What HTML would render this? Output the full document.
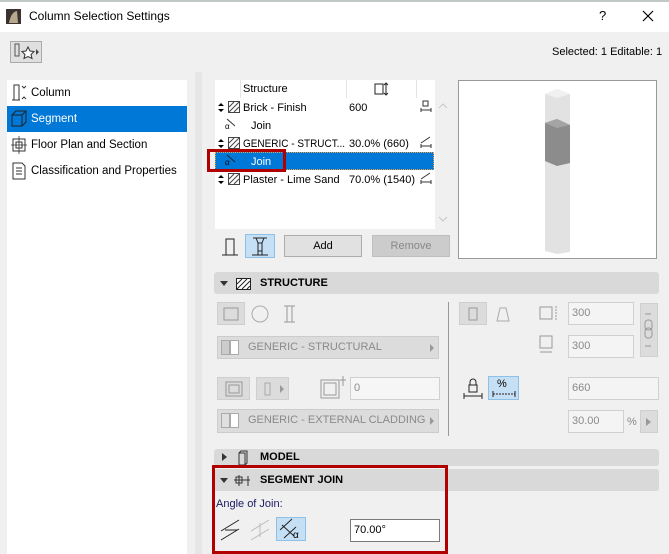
<!DOCTYPE html><html><head><style>
*{margin:0;padding:0;box-sizing:border-box}
body{width:669px;height:554px;background:#f0f0f0;font-family:"Liberation Sans",sans-serif;font-size:11px;color:#000;position:relative;overflow:hidden}
.a{position:absolute}
.t{position:absolute;white-space:nowrap}
.inp{position:absolute;background:#f4f4f4;border:1px solid #d0d0d0;color:#8a8a8a;padding:2px 3px;font-size:11px;line-height:16px}
.btn{position:absolute;background:#dcdcdc;border:1px solid #cfcfcf}
.hdr{position:absolute;left:214px;width:445px;background:#d9d9d9;border-radius:3px;font-weight:bold;font-size:11px}
.dd{position:absolute;background:#dcdcdc;border:1px solid #cccccc;color:#8a8a8a;font-size:11px;line-height:21px;padding-left:30px}
</style></head><body>
<div class="a" style="left:0;top:0;width:669px;height:32px;background:#fff"></div>
<div class="a" style="left:0;top:0;width:669px;height:2px;background:#c0c8c8"></div>
<svg class="a" style="left:6px;top:9px" width="15" height="15"><rect width="15" height="15" fill="#3a3330"/><path d="M3 14 Q5 3 11 2 L12 14Z" fill="#b8a890"/></svg>
<div class="t" style="left:29px;top:9px;font-size:12px">Column Selection Settings</div>
<div class="t" style="left:599px;top:8px;font-size:13px">?</div>
<svg class="a" style="left:642px;top:10px" width="12" height="12"><path d="M1 1L11 11M11 1L1 11" stroke="#000" stroke-width="1.2"/></svg>
<div class="btn" style="left:10px;top:41px;width:32px;height:22px;background:#e0e0e0;border-color:#aaa"></div>
<svg class="a" style="left:12px;top:43px" width="28" height="18"><rect x="3" y="1" width="4" height="12" fill="none" stroke="#555"/><path d="M16 4l2 4 4 .5-3 3 1 4-4-2-4 2 1-4-3-3 4-.5z" fill="#fff" stroke="#333"/><path d="M24 6l3 3-3 3z" fill="#444"/></svg>
<div class="t" style="left:552px;top:46px">Selected: 1 Editable: 1</div>
<div class="a" style="left:7px;top:80px;width:180px;height:474px;background:#fff"></div>
<div class="a" style="left:7px;top:106px;width:180px;height:26px;background:#0078d7"></div>
<svg class="a" style="left:11px;top:84px" width="16" height="18"><rect x="3" y="1" width="5" height="15" fill="none" stroke="#333"/><path d="M1 16h8" stroke="#333"/><path d="M11 2l2 2 2-2M11 15l2-2 2 2" stroke="#333" fill="none"/></svg>
<div class="t" style="left:31px;top:87px;font-size:11.5px">Column</div>
<svg class="a" style="left:11px;top:110px" width="16" height="18"><path d="M1 5h10v11H1zM1 5l4-4h10v11l-4 4M11 5l4-4" fill="none" stroke="#222"/></svg>
<div class="t" style="left:31px;top:113px;color:#fff;font-size:11.5px">Segment</div>
<svg class="a" style="left:11px;top:136px" width="16" height="18"><rect x="2" y="3" width="12" height="12" fill="none" stroke="#333"/><rect x="5" y="6" width="6" height="6" fill="none" stroke="#333"/><path d="M8 0v18M0 9h16" stroke="#333" stroke-width=".8"/></svg>
<div class="t" style="left:31px;top:139px;font-size:11.5px">Floor Plan and Section</div>
<svg class="a" style="left:11px;top:162px" width="16" height="18"><path d="M2 1h9l3 3v13H2z" fill="none" stroke="#333"/><path d="M5 6h6M5 9h6M5 12h6" stroke="#333"/></svg>
<div class="t" style="left:31px;top:165px;font-size:11.5px">Classification and Properties</div>
<div class="a" style="left:195px;top:72px;width:7px;height:482px;background:#e6e6e6"></div>
<!-- list -->
<div class="a" style="left:215px;top:80px;width:220px;height:149px;background:#fff"></div>
<div class="a" style="left:240px;top:80px;width:1px;height:18px;background:#e4e4e4"></div>
<div class="a" style="left:346px;top:80px;width:1px;height:18px;background:#e4e4e4"></div>
<div class="a" style="left:416px;top:80px;width:1px;height:18px;background:#e4e4e4"></div>
<div class="t" style="left:243px;top:83px">Structure</div>
<svg class="a" style="left:374px;top:82px" width="16" height="14"><rect x="1" y="2" width="8" height="10" fill="none" stroke="#222"/><path d="M12 1v12M10 3l2-2 2 2M10 11l2 2 2-2" stroke="#222" fill="none"/></svg>
<div class="a" style="left:215px;top:152px;width:219px;height:18px;background:#0078d7;border:1px dotted #f0a040"></div>
<div class="a" style="left:207px;top:149px;width:79px;height:23px;border:3px solid #b00000"></div>
<svg class="a" style="left:215px;top:98px" width="220" height="90" font-family="Liberation Sans" font-size="11">
<g fill="#000"><path d="M3 3l3-3 3 3zM3 6l3 3 3-3z" transform="translate(0,5)"/><path d="M3 3l3-3 3 3zM3 6l3 3 3-3z" transform="translate(0,41)"/><path d="M3 3l3-3 3 3zM3 6l3 3 3-3z" transform="translate(0,77)"/></g>
<g fill="none" stroke="#444"><rect x="13.5" y="3.5" width="11" height="11"/><rect x="13.5" y="39.5" width="11" height="11"/><rect x="13.5" y="75.5" width="11" height="11"/><path d="M14 9l5-5M14 14l10-10M19 14l5-5M14 45l5-5M14 50l10-10M19 50l5-5M14 81l5-5M14 86l10-10M19 86l5-5"/></g>
<text x="28" y="13">Brick - Finish</text><text x="134" y="13">600</text>
<text x="10" y="31" font-size="8">α</text><path d="M12 21l8 7" stroke="#333"/><text x="36" y="31">Join</text>
<text x="28" y="49" textLength="102" lengthAdjust="spacingAndGlyphs">GENERIC - STRUCT...</text><text x="134" y="49">30.0% (660)</text>
<text x="10" y="67" font-size="8" fill="#000">α</text><path d="M12 57l8 7" stroke="#222"/><text x="36" y="67" fill="#fff">Join</text>
<text x="28" y="85">Plaster - Lime Sand</text><text x="134" y="85">70.0% (1540)</text>
<g stroke="#333" fill="none"><rect x="208" y="3" width="5" height="5"/><path d="M206 12h10M206 10v4M216 10v4"/><path d="M206 45l9-6M206 48h10M206 46v4M216 46v4M206 81l9-6M206 84h10M206 82v4M216 82v4"/></g>
</svg>
<svg class="a" style="left:437px;top:100px" width="12" height="125"><path d="M2 8l4-4 4 4M2 117l4 4 4-4" stroke="#c8c8c8" fill="none"/></svg>
<!-- preview -->
<div class="a" style="left:458px;top:80px;width:199px;height:179px;background:#fff;border:1px solid #999"></div>
<svg class="a" style="left:543px;top:88px" width="30" height="168"><path d="M2 6l12-5 13 5v158l-13 2-12-3z" fill="#e2e2e2"/><path d="M2 6l12-5 13 5-13 4z" fill="#f0f0f0"/><path d="M2 35l12-4 13 6v38l-13 3-12-5z" fill="#8c8c8c"/><path d="M2 35l12-4 13 6-13 3z" fill="#a4a4a4"/></svg>
<!-- buttons -->
<svg class="a" style="left:221px;top:236px" width="18" height="20"><path d="M1 19h16M5 19V3h8v16" stroke="#222" fill="none"/></svg>
<div class="a" style="left:245px;top:234px;width:30px;height:24px;background:#c5dff5;border:1px solid #8ec0e8"></div>
<svg class="a" style="left:250px;top:236px" width="20" height="20"><path d="M2 19h16M3 2h14M6 2l2 5v12M14 2l-2 5v12M8 7h4M8 15h4" stroke="#222" fill="none"/></svg>
<div class="btn" style="left:284px;top:235px;width:78px;height:22px;background:#e1e1e1;border-color:#adadad;text-align:center;line-height:20px">Add</div>
<div class="btn" style="left:372px;top:235px;width:78px;height:22px;background:#cccccc;border-color:#bfbfbf;color:#888;text-align:center;line-height:20px">Remove</div>
<!-- structure -->
<div class="hdr" style="top:272px;height:22px"></div>
<svg class="a" style="left:220px;top:278px" width="40" height="12"><path d="M0 3h8l-4 5z" fill="#333"/><rect x="16.5" y="0.5" width="14" height="11" fill="#fff" stroke="#222"/><path d="M17 6l5-5M17 11l10-10M22 11l8-8M27 11l3-3" stroke="#222"/></svg>
<div class="t" style="left:260px;top:277px;font-weight:bold">STRUCTURE</div>
<div class="btn" style="left:217px;top:302px;width:28px;height:23px"></div>
<svg class="a" style="left:217px;top:302px" width="90" height="24"><rect x="7" y="6" width="14" height="12" fill="none" stroke="#999"/><circle cx="43" cy="12" r="8" fill="none" stroke="#aaa"/><path d="M67 4h11M67 20h11M70 4v16M75 4v16" stroke="#999" fill="none"/></svg>
<div class="dd" style="left:217px;top:336px;width:222px;height:23px">GENERIC - STRUCTURAL</div>
<svg class="a" style="left:221px;top:340px" width="220" height="16"><rect x="0.5" y="0.5" width="8" height="14" fill="#ccc" stroke="#aaa"/><rect x="9.5" y="0.5" width="8" height="14" fill="#fff" stroke="#aaa"/><path d="M209 4l4 4-4 4z" fill="#999"/></svg>
<div class="btn" style="left:217px;top:377px;width:33px;height:23px"></div>
<svg class="a" style="left:225px;top:381px" width="18" height="16"><rect x="1" y="1" width="16" height="14" fill="none" stroke="#999"/><rect x="4" y="4" width="10" height="8" fill="none" stroke="#999"/></svg>
<div class="btn" style="left:256px;top:377px;width:33px;height:23px"></div>
<svg class="a" style="left:260px;top:381px" width="28" height="16"><rect x="5" y="2" width="5" height="12" fill="none" stroke="#aaa"/><path d="M20 4l4 4-4 4z" fill="#999"/></svg>
<svg class="a" style="left:320px;top:376px" width="26" height="24"><rect x="1" y="4" width="18" height="18" fill="none" stroke="#999"/><rect x="4" y="7" width="12" height="12" fill="none" stroke="#999"/><path d="M23 0v10M20 4h6" stroke="#999"/></svg>
<div class="inp" style="left:350px;top:377px;width:90px;height:23px;background:#f6f6f6">0</div>
<div class="dd" style="left:217px;top:409px;width:222px;height:24px">GENERIC - EXTERNAL CLADDING</div>
<svg class="a" style="left:221px;top:413px" width="220" height="16"><rect x="0.5" y="0.5" width="8" height="14" fill="#e0e0e0" stroke="#aaa"/><rect x="9.5" y="0.5" width="8" height="14" fill="#fff" stroke="#aaa"/><path d="M209 4l4 4-4 4z" fill="#999"/></svg>
<div class="a" style="left:448px;top:302px;width:1px;height:134px;background:#999"></div>
<div class="btn" style="left:459px;top:302px;width:28px;height:23px"></div>
<svg class="a" style="left:459px;top:302px" width="110" height="60"><rect x="10" y="6" width="8" height="12" fill="none" stroke="#999"/><path d="M41 6h6l3 13h-12z" fill="none" stroke="#aaa"/><rect x="81" y="5" width="12" height="12" fill="none" stroke="#999"/><path d="M97 4v14" stroke="#999" stroke-dasharray="2 1"/><rect x="81" y="34" width="12" height="12" fill="none" stroke="#999"/><path d="M81 50h12" stroke="#999"/></svg>
<div class="inp" style="left:568px;top:302px;width:66px;height:23px">300</div>
<div class="inp" style="left:568px;top:335px;width:66px;height:23px">300</div>
<div class="btn" style="left:640px;top:303px;width:18px;height:54px"></div>
<svg class="a" style="left:641px;top:312px" width="16" height="36"><path d="M4 2h6M4 34h6" stroke="#999"/><rect x="4" y="8" width="7" height="10" rx="3" fill="none" stroke="#999"/><rect x="4" y="16" width="7" height="10" rx="3" fill="none" stroke="#999"/></svg>
<svg class="a" style="left:463px;top:378px" width="22" height="22"><rect x="6" y="7" width="8" height="7" fill="none" stroke="#222"/><path d="M7 7V4a3 3 0 016 0v3" fill="none" stroke="#222"/><path d="M1 18h18M1 15v6M19 15v6" stroke="#222"/></svg>
<div class="a" style="left:488px;top:376px;width:31px;height:24px;background:#c5dff5;border:1px solid #8ec0e8"></div>
<div class="t" style="left:497px;top:378px;font-size:11px">%</div>
<svg class="a" style="left:492px;top:390px" width="24" height="8"><path d="M1 4h22" stroke="#222" stroke-dasharray="2 1"/><path d="M1 1v6M23 1v6" stroke="#222"/></svg>
<div class="inp" style="left:568px;top:377px;width:91px;height:23px">660</div>
<div class="inp" style="left:568px;top:410px;width:56px;height:23px">30.00</div>
<div class="t" style="left:627px;top:416px;color:#888">%</div>
<div class="btn" style="left:640px;top:410px;width:18px;height:23px"></div>
<svg class="a" style="left:645px;top:417px" width="8" height="10"><path d="M1 1l5 4-5 4z" fill="#999"/></svg>
<!-- model -->
<div class="hdr" style="top:449px;height:17px"></div>
<svg class="a" style="left:221px;top:450px" width="30" height="16"><path d="M1 3l5 4-5 4z" fill="#333"/><path d="M18 3h6v12h-6zM18 3l2-2h6v12l-2 2" fill="none" stroke="#333"/></svg>
<div class="t" style="left:260px;top:451px;font-weight:bold">MODEL</div>
<!-- segment join -->
<div class="hdr" style="top:469px;height:22px"></div>
<svg class="a" style="left:220px;top:472px" width="36" height="16"><path d="M0 6h8l-4 5z" fill="#333"/><path d="M16 5h6v6h-6zM19 3v11M14 8h12M28 4v10M26 8h4" stroke="#333" fill="none"/></svg>
<div class="t" style="left:260px;top:474px;font-weight:bold">SEGMENT JOIN</div>
<div class="t" style="left:216px;top:498px;color:#1a1a60">Angle of Join:</div>
<svg class="a" style="left:220px;top:518px" width="90" height="24"><path d="M1 13l18-11M1 22l18-11M5 12h12" stroke="#222" fill="none"/><path d="M31 13l18-11M31 22l18-11M40 5v14" stroke="#bbb" fill="none"/></svg>
<div class="a" style="left:276px;top:517px;width:30px;height:24px;background:#c5dff5;border:1px solid #8ec0e8"></div>
<svg class="a" style="left:278px;top:518px" width="28" height="22"><path d="M2 12l12-11M6 20l12-11M4 7l12 11" stroke="#222" fill="none"/><text x="15" y="20" font-size="10" font-family="Liberation Sans">α</text></svg>
<div class="inp" style="left:350px;top:519px;width:90px;height:23px;background:#fff;border-color:#7a7a7a;color:#000">70.00°</div>
<div class="a" style="left:212px;top:465px;width:236px;height:89px;border:3px solid #b00000"></div>
</body></html>
